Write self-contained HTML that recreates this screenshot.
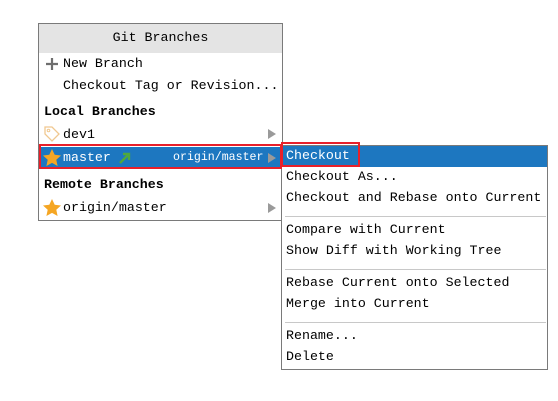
<!DOCTYPE html>
<html><head><meta charset="utf-8"><style>
*{margin:0;padding:0;box-sizing:border-box}
body{width:558px;height:401px;background:#fff;position:relative;overflow:hidden;font-family:"Liberation Mono","DejaVu Sans Mono",monospace;font-size:13.3px;color:#000}
.t{position:absolute;white-space:pre;line-height:16px;margin-top:1px}
.b{font-weight:bold}
.w{color:#fff}
.arr{position:absolute;width:0;height:0;border-top:5px solid transparent;border-bottom:5px solid transparent;border-left:8px solid #9a9a9a}
.sep{position:absolute;left:285px;width:261px;height:1px;background:#c8c8c8}
</style></head><body>
<div style="position:absolute;left:38px;top:23px;width:245px;height:198px;border:1px solid #7a7a7a;background:#fff"></div>
<div style="position:absolute;left:39px;top:24px;width:243px;height:29px;background:#e4e4e4"></div>
<div class="t" style="left:38px;width:245px;text-align:center;top:29px">Git Branches</div>

<svg style="position:absolute;left:45px;top:57px" width="14" height="14"><path d="M7 1v12M1 7h12" stroke="#6e6e6e" stroke-width="2.2"/></svg>
<div class="t" style="left:63px;top:55px">New Branch</div>
<div class="t" style="left:63px;top:77px">Checkout Tag or Revision...</div>
<div class="t b" style="left:44px;top:103px">Local Branches</div>
<svg style="position:absolute;left:43px;top:125px" width="18" height="18"><path d="M2 2h7l7 7-7 7-7-7z" fill="none" stroke="#f0c890" stroke-width="1.3"/><circle cx="5.5" cy="5.5" r="1.3" fill="none" stroke="#f0c890"/></svg>
<div class="t" style="left:63px;top:126px">dev1</div>
<div class="arr" style="left:268px;top:129px"></div>

<div style="position:absolute;left:39px;top:147px;width:243px;height:21px;background:#1d77c0"></div>
<svg style="position:absolute;left:42px;top:148px" width="20" height="19"><path d="M10 1l2.7 5.8 6.3.7-4.7 4.3 1.3 6.2L10 14.9 4.4 18l1.3-6.2L1 7.5l6.3-.7z" fill="#f5a623"/></svg>
<div class="t w" style="left:63px;top:149px">master</div>
<svg style="position:absolute;left:118px;top:151px" width="14" height="14"><path d="M2 12L11 3M5 3h6v6" fill="none" stroke="#4fa83d" stroke-width="2.4"/></svg>
<div class="t w" style="left:173px;top:149px;font-size:11.6px">origin/master</div>
<div class="arr" style="left:268px;top:153px"></div>

<div class="t b" style="left:44px;top:176px">Remote Branches</div>
<svg style="position:absolute;left:42px;top:198px" width="20" height="19"><path d="M10 1l2.7 5.8 6.3.7-4.7 4.3 1.3 6.2L10 14.9 4.4 18l1.3-6.2L1 7.5l6.3-.7z" fill="#f5a623"/></svg>
<div class="t" style="left:63px;top:199px">origin/master</div>
<div class="arr" style="left:268px;top:203px"></div>

<div style="position:absolute;left:281px;top:145px;width:267px;height:225px;border:1px solid #7a7a7a;background:#fff"></div>
<div style="position:absolute;left:282px;top:146px;width:265px;height:21px;background:#1d77c0"></div>
<div class="t w" style="left:286px;top:147px">Checkout</div>
<div class="t" style="left:286px;top:168px">Checkout As...</div>
<div class="t" style="left:286px;top:189px">Checkout and Rebase onto Current</div>
<div class="sep" style="top:216px"></div>
<div class="t" style="left:286px;top:221px">Compare with Current</div>
<div class="t" style="left:286px;top:242px">Show Diff with Working Tree</div>
<div class="sep" style="top:269px"></div>
<div class="t" style="left:286px;top:274px">Rebase Current onto Selected</div>
<div class="t" style="left:286px;top:295px">Merge into Current</div>
<div class="sep" style="top:322px"></div>
<div class="t" style="left:286px;top:327px">Rename...</div>
<div class="t" style="left:286px;top:348px">Delete</div>

<div style="position:absolute;left:39px;top:144px;width:243px;height:25px;border:2px solid #e8202a"></div>
<div style="position:absolute;left:281px;top:142px;width:79px;height:25px;border:2px solid #e8202a"></div>
</body></html>
